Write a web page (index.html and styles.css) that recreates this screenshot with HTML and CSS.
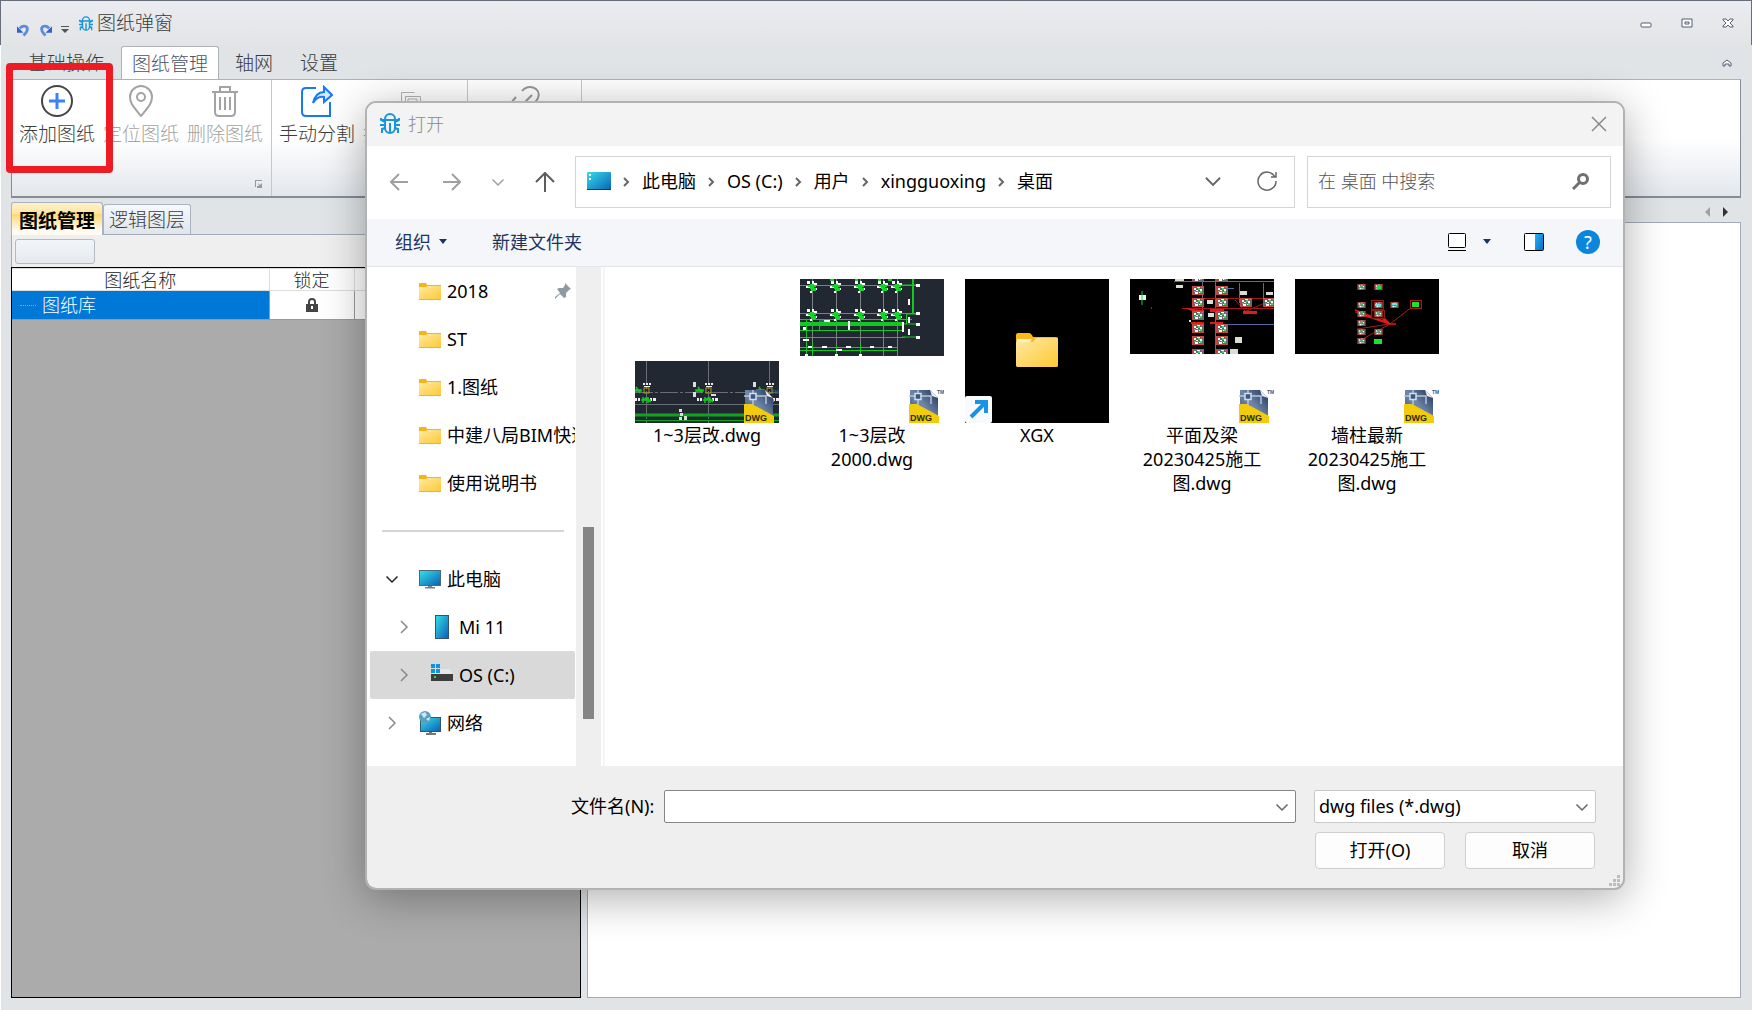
FILE: index.html
```html
<!DOCTYPE html>
<html lang="zh-CN">
<head>
<meta charset="utf-8">
<title>图纸弹窗</title>
<link rel="stylesheet" href="styles.css">
</head>
<body>
<svg class="defs" aria-hidden="true">
  <defs>
    <linearGradient id="gold" x1="0" y1="0" x2="1" y2="1"><stop offset="0" stop-color="#ffe9a6"/><stop offset="1" stop-color="#ffc933"/></linearGradient>
    <linearGradient id="sea" x1="0" y1="0" x2="1" y2="1"><stop offset="0" stop-color="#35dde6"/><stop offset="1" stop-color="#0a62b8"/></linearGradient>
    <linearGradient id="sky" x1="0" y1="0" x2="1" y2="1"><stop offset="0" stop-color="#29b2f0"/><stop offset="1" stop-color="#0070cf"/></linearGradient>
    <linearGradient id="navy" x1="0" y1="1" x2="1" y2="0"><stop offset="0" stop-color="#2f4a78"/><stop offset="0.5" stop-color="#6f87ab"/><stop offset="1" stop-color="#1d3156"/></linearGradient>
    <symbol id="bug" viewBox="0 0 20 21">
      <path d="M5 6a5 5 0 0 1 10 0M2 7h16M5 7v8a5 5 0 0 0 10 0V7M10 10v10M1 5v2l4 2M19 5v2l-4 2M0 12h5M20 12h-5M5 15l-3 1v4M15 15l3 1v4" fill="none" stroke="#1796db" stroke-width="2"/>
    </symbol>
    <symbol id="folder" viewBox="0 0 22 17">
      <path d="M0 0h7l1 2h14v15H0z" fill="#f5b31d"/>
      <path d="M0 4h7l2-1h13v13H0z" fill="url(#gold)"/>
    </symbol>
    <symbol id="monitor" viewBox="0 0 22 19">
      <rect x="0" y="0" width="22" height="16" fill="#4a6a78"/><rect x="1" y="1" width="20" height="14" fill="url(#sea)"/>
      <path d="M9 16h4v1h3v1.500H6V17h3z" fill="#777e84"/>
    </symbol>
    <symbol id="down" viewBox="0 0 14 14"><path d="M1.500 4.500L7 10l5.500-5.500" fill="none" stroke="currentColor" stroke-width="1.500"/></symbol>
    <symbol id="right" viewBox="0 0 14 14"><path d="M4 1l6 6-6 6" fill="none" stroke="currentColor" stroke-width="1.500"/></symbol>
    <symbol id="crumb" viewBox="0 0 8 10"><path d="M2 1l4 4-4 4" fill="none" stroke="#666" stroke-width="2"/></symbol>
    <symbol id="dwg" viewBox="0 0 35 33">
      <path d="M1 0h20l8 8v25H1z" fill="url(#navy)"/><path d="M21 0l8 8-6-2z" fill="#e8eef5"/>
      <path d="M0 6h6M12 6h10v8M9 0v3M9 10v5" stroke="#b9c6da" stroke-width="1.500" fill="none"/>
      <rect x="6" y="3.500" width="6" height="6" fill="#3a5784" stroke="#d5deea" stroke-width="1.500"/>
      <path d="M0 14h8l22 12v7H0z" fill="#f2cb0c"/>
      <text x="1" y="31" class="dwg-text">DWG</text><text x="28" y="4" class="tm-text">TM</text>
    </symbol>
    <symbol id="node" viewBox="0 0 12 14" overflow="visible">
      <path d="M1 1h3v3H1zM6 1h2v4H6zM0 6h4v2H0zM8 3h3v2H8zM7 8h4v2H7zM4 11h2v2H4z" fill="#fff"/>
      <path d="M2 5h8v2H2zM4 4h4v5H4zM5 8h5v3H5z" fill="#13d62a"/>
    </symbol>
    <symbol id="column" viewBox="0 0 24 22" overflow="visible">
      <path d="M9 0h2v2H9zM12 0h2v2h-2zM15 0h2v2h-2zM10 3h6v1h-6zM1 15h2v3H1zM4 15h2v3H4zM16 15h2v3h-2zM19 15h3v3h-3z" fill="#eee"/>
      <path d="M0 7h7v1H0zM2 4l4 6M8 18l4-3 5 4M9 14v6M14 14v6M7 17h10" fill="none" stroke="#12c91e" stroke-width="1.500"/>
      <rect x="10" y="5" width="5" height="5" fill="none" stroke="#a39a24"/>
    </symbol>
    <symbol id="sheet" viewBox="0 0 12 9">
      <rect x="0.500" y="0.500" width="11" height="8" fill="#5d6b62" stroke="#c44" />
      <path d="M2 2h2v2H2zM5 1h3v1H5zM8 3h2v2H8zM3 6h3v2H3zM7 6h2v1H7zM4 4h2v1H4z" fill="#fff"/><path d="M6 2h2v2H6zM2 5h2v1H2zM8 5h2v2H8z" fill="#2fe05a"/><path d="M5 5h2v1H5zM9 1h2v1H9z" fill="#d44fc4"/>
    </symbol>
  </defs>
</svg>

<div class="app">
  <header class="titlebar">
    <div class="quick">
      <button class="bare" aria-label="撤销"><svg width="13" height="14" viewBox="0 0 14 14"><path d="M3 5c4-4 9-2 8 2 0 2-2 4-4 6" fill="none" stroke="#5b8ad8" stroke-width="3"/><path d="M0 3v7h7z" fill="#3465c2"/></svg></button>
      <button class="bare" aria-label="重做"><svg width="13" height="14" viewBox="0 0 14 14"><path d="M11 5C7 1 2 3 3 7c0 2 2 4 4 6" fill="none" stroke="#5b8ad8" stroke-width="3"/><path d="M14 3v7H7z" fill="#3465c2"/></svg></button>
      <button class="bare" aria-label="自定义快速访问"><svg width="8" height="8" viewBox="0 0 8 8"><path d="M0 0h8v1H0zM0 3h8L4 7z" fill="#555"/></svg></button>
    </div>
    <h1 class="caption"><svg width="14" height="15"><use href="#bug"/></svg>图纸弹窗</h1>
    <div class="window-buttons">
      <button class="bare" aria-label="最小化"><svg width="12" height="12"><rect x="1" y="6" width="10" height="4" rx="1" fill="#fff" stroke="#555b75"/></svg></button>
      <button class="bare" aria-label="还原"><svg width="12" height="12"><path d="M1 2h10v8H1zM4 5h4v2H4z" fill="#fff" stroke="#555b75"/></svg></button>
      <button class="bare" aria-label="关闭"><svg width="12" height="12"><path d="M1 2h3l2 2 2-2h3v1L8 6l3 3v1H8L6 8l-2 2H1V9l3-3-3-3z" fill="#fff" stroke="#555b75"/></svg></button>
    </div>
  </header>

  <div class="frame">
    <nav class="tabs">
      <button class="tab tab-first">基础操作</button>
      <button class="tab tab-active">图纸管理</button>
      <button class="tab">轴网</button>
      <button class="tab tab-last">设置</button>
      <button class="bare collapse" aria-label="折叠功能区"><svg width="10" height="8"><path d="M1 4l4-3 4 3v3H7V5H3v2H1z" fill="#fff" stroke="#555b75"/></svg></button>
    </nav>

    <section class="ribbon">
      <div class="group">
        <button class="tool"><svg width="32" height="32"><circle cx="16" cy="16" r="15" fill="none" stroke="#454545" stroke-width="2"/><path d="M8 16h16M16 8v16" stroke="#3b82f6" stroke-width="3"/></svg>添加图纸</button>
        <button class="tool tool-off"><svg width="32" height="32" fill="none" stroke="#a3a3a3" stroke-width="2"><path d="M16 31C8 21 5 18 5 12a11 11 0 0 1 22 0c0 6-3 9-11 19z"/><circle cx="16" cy="12" r="4"/></svg>定位图纸</button>
        <button class="tool tool-off"><svg width="32" height="32" fill="none" stroke="#a3a3a3" stroke-width="2"><path d="M3 7h26M11 6V2h10v4M6 8v19q0 4 4 4h12q4 0 4-4V8M11 12v13M16 12v13M21 12v13"/></svg>删除图纸</button>
        <svg class="launcher" width="8" height="8"><path d="M0 7V0h7" fill="none" stroke="#999" stroke-width="2"/><path d="M3 3l2 2 2-2v5H2V6h2z" fill="#999"/></svg>
      </div>
      <div class="group">
        <button class="tool"><svg width="32" height="32" fill="none" stroke="#1677ff" stroke-width="2"><path d="M15 3H5Q1 3 1 7v20q0 4 4 4h24V17"/><path d="M12 18C14 10 18 7 23 7V2l8 8-8 7v-5c-5-1-8 1-11 6z" fill="#d5e9fa"/></svg>手动分割</button>
        <button class="tool tool-off tool-wide"><svg width="32" height="32" fill="none" stroke="#b3b3b3" stroke-width="1"><path d="M6.500 26V7.500h13M10.500 11.500h15v17h-15zM13 14h9v8h-9z"/></svg><span>批</span></button>
      </div>
      <div class="group group-link">
        <button class="tool tool-off" aria-label="链接"><svg width="34" height="32" fill="none" stroke="#999" stroke-width="2"><path d="M15 6c6-8 20-3 16 7-1 3-4 5-6 7M9 12c-4 4-6 7-5 12M15 20l10-10"/></svg></button>
      </div>
    </section>

    <main class="workspace">
      <section class="left">
        <div class="panel-tabs">
          <button class="ptab ptab-active">图纸管理</button>
          <button class="ptab">逻辑图层</button>
        </div>
        <div class="panel-bar"><button class="blank" aria-label="筛选"></button></div>
        <div class="tree">
          <table>
            <thead><tr><th class="c-name">图纸名称</th><th class="c-lock">锁定</th><th></th></tr></thead>
            <tbody><tr><td class="chosen">图纸库</td><td class="c-lock"><svg width="12" height="14"><path d="M3 6V4a3 3 0 0 1 6 0v2" fill="none" stroke="#444" stroke-width="2"/><path d="M0 6h12v8H0z" fill="#444"/><path d="M5 8h2v3H5z" fill="#fff"/></svg></td><td></td></tr></tbody>
          </table>
        </div>
      </section>
      <section class="right">
        <div class="pager">
          <button class="bare" aria-label="上一页"><svg width="5" height="10"><path d="M5 0v10L0 5z" fill="#a0a0a0"/></svg></button>
          <button class="bare" aria-label="下一页"><svg width="5" height="10"><path d="M0 0v10l5-5z" fill="#333"/></svg></button>
        </div>
        <div class="canvas"></div>
      </section>
    </main>
  </div>
</div>

<div class="highlight"></div>

<div class="dialog" role="dialog" aria-labelledby="dialog-title">
  <header class="d-title">
    <svg width="20" height="21"><use href="#bug"/></svg>
    <h2 id="dialog-title">打开</h2>
    <button class="bare" aria-label="关闭"><svg width="16" height="16"><path d="M1 1l14 14M15 1L1 15" stroke="#8a8a8a" stroke-width="1.500"/></svg></button>
  </header>
  <div class="d-nav">
    <button class="bare" aria-label="后退"><svg width="18" height="18" fill="none" stroke="#a0a0a0" stroke-width="2"><path d="M18 9H1M9 1L1 9l8 8"/></svg></button>
    <button class="bare nav-fwd" aria-label="前进"><svg width="18" height="18" fill="none" stroke="#a0a0a0" stroke-width="2"><path d="M0 9h17M9 1l8 8-8 8"/></svg></button>
    <button class="bare nav-recent" aria-label="最近"><svg width="14" height="14"><use href="#down"/></svg></button>
    <button class="bare nav-up" aria-label="上移"><svg width="20" height="20" fill="none" stroke="#5c5c5c" stroke-width="2"><path d="M10 20V1M1 10l9-9 9 9"/></svg></button>
    <div class="address">
      <svg width="24" height="18"><rect width="24" height="18" rx="1" fill="url(#sea)"/><path d="M0 17h24v1H0z" fill="#07406f"/><path d="M2 2h2v2H2zM2 6h2v2H2z" fill="#fff"/></svg>
      <svg class="sep" width="8" height="10"><use href="#crumb"/></svg><a href="#">此电脑</a>
      <svg class="sep" width="8" height="10"><use href="#crumb"/></svg><a href="#">OS (C:)</a>
      <svg class="sep" width="8" height="10"><use href="#crumb"/></svg><a href="#">用户</a>
      <svg class="sep" width="8" height="10"><use href="#crumb"/></svg><a href="#">xingguoxing</a>
      <svg class="sep" width="8" height="10"><use href="#crumb"/></svg><a href="#">桌面</a>
      <button class="bare history" aria-label="历史"><svg width="18" height="18"><use href="#down"/></svg></button>
      <button class="bare" aria-label="刷新"><svg width="20" height="20" fill="none" stroke="#666" stroke-width="1.500"><path d="M18 6a9 9 0 1 0 1 4M19 1v5h-5"/></svg></button>
    </div>
    <label class="search"><input type="text" placeholder="在 桌面 中搜索" aria-label="搜索"><svg width="17" height="17" fill="none" stroke="#707070"><circle cx="11" cy="6" r="4.500" stroke-width="3"/><path d="M8 9l-7 7" stroke-width="3"/></svg></label>
  </div>
  <div class="d-tools">
    <button class="bare">组织<svg class="caret" width="8" height="5"><path d="M0 0h8L4 5z" fill="#1c3560"/></svg></button>
    <button class="bare new-folder">新建文件夹</button>
    <button class="bare view" aria-label="视图"><svg width="18" height="18" fill="#fff" stroke="#000"><rect x="0.500" y="0.500" width="17" height="14" rx="1"/><path d="M0 17.500h18"/></svg></button>
    <button class="bare view-more" aria-label="更多视图"><svg width="8" height="5"><path d="M0 0h8L4 5z" fill="#1c3560"/></svg></button>
    <button class="bare preview" aria-label="预览窗格"><svg width="20" height="18"><rect x="0.500" y="0.500" width="19" height="17" rx="1" fill="#fff" stroke="#000"/><path d="M11 1h8v16h-8z" fill="url(#sky)"/></svg></button>
    <button class="help" aria-label="帮助">?</button>
  </div>
  <div class="d-body">
    <nav class="side">
      <a class="item" href="#"><i class="chev"></i><svg width="22" height="17"><use href="#folder"/></svg><span>2018</span><svg class="pin" width="16" height="16"><path d="M10 0l6 6-2 1-3 3v4l-2 1-4-4-4 4-1 1v-2l5-4-3-4 2-1h4l2-3z" fill="#8d9aa3"/></svg></a>
      <a class="item" href="#"><i class="chev"></i><svg width="22" height="17"><use href="#folder"/></svg><span>ST</span></a>
      <a class="item" href="#"><i class="chev"></i><svg width="22" height="17"><use href="#folder"/></svg><span>1.图纸</span></a>
      <a class="item" href="#"><i class="chev"></i><svg width="22" height="17"><use href="#folder"/></svg><span>中建八局BIM快速</span></a>
      <a class="item" href="#"><i class="chev"></i><svg width="22" height="17"><use href="#folder"/></svg><span>使用说明书</span></a>
      <hr>
      <a class="item" href="#"><svg class="chev chev-open" width="14" height="14"><use href="#down"/></svg><svg width="22" height="19"><use href="#monitor"/></svg><span>此电脑</span></a>
      <a class="item item-sub" href="#"><svg class="chev" width="14" height="14"><use href="#right"/></svg><svg width="22" height="24"><path d="M4 0h14v24H4z" fill="#33566b"/><path d="M5 1h12v22H5z" fill="url(#sea)"/></svg><span>Mi 11</span></a>
      <a class="item item-sub item-on" href="#"><svg class="chev" width="14" height="14"><use href="#right"/></svg><svg width="22" height="22"><path d="M2 5h17l3 6H0z" fill="#e4e7ea"/><path d="M0 0h4v4H0zM5 0h4v4H5zM0 5h4v4H0zM5 5h4v4H5z" fill="#0f94e4"/><path d="M0 10h22v7H0z" fill="#3d3d3d"/><path d="M3 12h2v2H3z" fill="#2be02b"/></svg><span>OS (C:)</span></a>
      <a class="item" href="#"><svg class="chev" width="14" height="14"><use href="#right"/></svg><svg width="22" height="24"><rect x="1" y="6" width="21" height="15" fill="#33566b"/><rect x="2" y="7" width="19" height="13" fill="url(#sea)"/><path d="M10 21h3v1h4v2H7v-2h3z" fill="#777"/><circle cx="6" cy="6" r="6" fill="#5b9fc4"/><path d="M2 3l4-2 2 3-3 3zM7 8l4-2-1 4z" fill="#d0e8f4"/></svg><span>网络</span></a>
    </nav>
    <div class="scroll"><div class="thumb"></div></div>
    <ul class="files">
      <li>
        <div class="pic"><svg width="144" height="62"><rect width="144" height="62" fill="#222831"/><path d="M11.500 0v62M73.500 0v62M134.500 0v62" stroke="#686d73" stroke-dasharray="24 2 2 2"/><path d="M0 31.500h144" stroke="#686d73" stroke-dasharray="18 2 3 2"/><path d="M0 43.500h144" stroke="#686d73"/><path d="M0 54h144" stroke="#12a31e" stroke-width="3"/><path d="M0 59.500h144" stroke="#12a31e"/><use href="#column" x="-1" y="22" width="24" height="22"/><use href="#column" x="61" y="22" width="24" height="22"/><use href="#column" x="122" y="22" width="24" height="22"/><path d="M58 21h3v5h-3zM58 31h3v5h-3zM118 21h3v5h-3zM76 33h5v2h-5zM44 48h3v3h-3zM45 52h3v3h-3zM44 56h3v3h-3zM49 55h3v4h-3z" fill="#ddd"/></svg><svg class="badge" width="35" height="33"><use href="#dwg"/></svg></div>
        <span>1~3层改.dwg</span>
      </li>
      <li>
        <div class="pic pic-top"><svg width="144" height="77"><rect width="144" height="77" fill="#222831"/><path d="M12.500 0v77M36.500 0v77M60.500 0v77M83.500 0v77M97.500 0v77M0 6.500h118M0 34.500h118M0 40.500h112M0 58.500h105" stroke="#7b8085"/><path d="M0 45h102" stroke="#12c91e" stroke-width="4"/><path d="M0 51.500h103M0 68.500h98M0 71.500h98M12.500 62v15M36.500 66v11M60.500 64v13M83.500 64v13M97.500 60v17M6.500 40v37M106.500 34v11M100 45h18M102 58h16M112.500 0v35M106 35h12M98 6h20" stroke="#12c91e"/><path d="M113 0v35" stroke="#12c91e" stroke-width="2"/><path d="M109 20v6M109 38v6M109 50v6M103 43v10M49 42v9" stroke="#fff" stroke-width="2"/><path d="M116 5h4v3h-4zM116 33h4v3h-4zM116 44h4v3h-4zM116 57h4v3h-4zM8 67h4v2H8zM22 67h5v2h-5zM46 67h5v2h-5zM70 67h4v2h-4zM88 67h4v2h-4zM36 70h6v2h-6zM24 41h6v2h-6zM3 48h3v3H3zM3 60h6v2H3zM5 75h3v2H5zM35 75h3v2h-3zM59 75h3v2h-3z" fill="#fff"/><path d="M19.500 51v-9h5" fill="none" stroke="#1ea5bd"/><path d="M30 0h4v2h-4zM55 0h3v3h-3zM78 0h3v2h-3zM88 0h4v2h-4z" fill="#13d62a"/><use href="#node" x="6" y="1" width="12" height="14"/><use href="#node" x="30" y="1" width="12" height="14"/><use href="#node" x="54" y="1" width="12" height="14"/><use href="#node" x="77" y="1" width="12" height="14"/><use href="#node" x="91" y="1" width="12" height="14"/><use href="#node" x="6" y="29" width="12" height="14"/><use href="#node" x="30" y="29" width="12" height="14"/><use href="#node" x="54" y="29" width="12" height="14"/><use href="#node" x="77" y="29" width="12" height="14"/><use href="#node" x="91" y="29" width="12" height="14"/></svg><svg class="badge" width="35" height="33"><use href="#dwg"/></svg></div>
        <span>1~3层改<br>2000.dwg</span>
      </li>
      <li>
        <div class="pic"><svg width="144" height="144"><rect width="144" height="144"/><path d="M51 56q0-2 2-2h11q2 0 4 4h23q2 0 2 2v26q0 2-2 2H53q-2 0-2-2z" fill="#ffb81a"/><path d="M51 63h17l3-4h22v27q0 2-2 2H53q-2 0-2-2z" fill="url(#gold)"/><path d="M52 60h15l-2 3H52z" fill="#fff3d2"/><rect x="0" y="117" width="27" height="27" rx="2" fill="#f8fafd"/><path d="M6 138l14-14M10 123h11v11" fill="none" stroke="#1a93e4" stroke-width="4"/></svg></div>
        <span>XGX</span>
      </li>
      <li>
        <div class="pic pic-top"><svg width="144" height="75"><rect width="144" height="75"/><path d="M72.500 0v34M85.500 0v75M109.500 4v20M133.500 4v20M44 2.500h100M85 45.500h59M98 9.500h6" stroke="#5a6aa5"/><path d="M73 19.500h71M52 29.500h92M105 21l10 11M144 20l-30 13M122 29l-8 5" stroke="#a31818" fill="none"/><path d="M80 30h14v3H80zM61 43h13v2H61zM80 43h13v2H80zM113 32h14v3h-14zM54 29l8 3 12 1v-2z" fill="#e11b1b"/><path d="M9 16h7v5H9z" fill="#dfe"/><path d="M12 12v14M21 29h1" stroke="#25c957"/><use href="#sheet" x="62" y="-6" width="12" height="9"/><use href="#sheet" x="86" y="-6" width="12" height="9"/><use href="#sheet" x="62" y="7" width="12" height="9"/><use href="#sheet" x="86" y="7" width="12" height="9"/><use href="#sheet" x="62" y="19" width="12" height="9"/><use href="#sheet" x="86" y="19" width="12" height="9"/><use href="#sheet" x="110" y="19" width="12" height="9"/><use href="#sheet" x="133" y="19" width="12" height="9"/><use href="#sheet" x="62" y="32" width="12" height="9"/><use href="#sheet" x="86" y="32" width="12" height="9"/><use href="#sheet" x="62" y="45" width="12" height="9"/><use href="#sheet" x="86" y="45" width="12" height="9"/><use href="#sheet" x="62" y="57" width="12" height="9"/><use href="#sheet" x="86" y="57" width="12" height="9"/><use href="#sheet" x="62" y="70" width="12" height="9"/><use href="#sheet" x="86" y="70" width="12" height="9"/><path d="M45 0h9v2h-9zM46 6h7v3h-7zM110 12h7v4h-7zM136 13h7v3h-7zM77 21h6v4h-6zM78 34h6v4h-6zM105 58h7v6h-7zM100 70h8v5h-8zM59 41h2v2h-2z" fill="#dcdcd2"/></svg><svg class="badge" width="35" height="33"><use href="#dwg"/></svg></div>
        <span>平面及梁<br>20230425施工<br>图.dwg</span>
      </li>
      <li>
        <div class="pic pic-top"><svg width="144" height="75"><rect width="144" height="75"/><path d="M62 50l33-5 22-17M64 62l31-17M60 33l35 12" stroke="#a81c1c" fill="none"/><path d="M60 31l18 7 17 7h6M68 36l27 9M82 36l13 9M88 38l7 7" fill="none" stroke="#e11b1b" stroke-width="1.500"/><rect x="76.500" y="21.500" width="12" height="9" fill="#300" stroke="#8c1c1c"/><rect x="115.500" y="21.500" width="11" height="8" fill="#300" stroke="#a81c1c"/><rect x="76.500" y="31.500" width="13" height="8" fill="#300" stroke="#8c1c1c"/><use href="#sheet" x="62" y="5" width="9" height="6"/><use href="#sheet" x="79" y="5" width="9" height="6"/><use href="#sheet" x="62" y="23" width="9" height="6"/><use href="#sheet" x="79" y="23" width="9" height="6"/><use href="#sheet" x="95" y="23" width="9" height="6"/><use href="#sheet" x="62" y="32" width="9" height="6"/><use href="#sheet" x="79" y="32" width="9" height="6"/><use href="#sheet" x="62" y="41" width="9" height="6"/><use href="#sheet" x="62" y="50" width="9" height="6"/><use href="#sheet" x="79" y="50" width="9" height="6"/><use href="#sheet" x="62" y="59" width="9" height="6"/><path d="M79 60h8v5h-8zM117 23h7v5h-7zM82 7h4v3h-4z" fill="#1ce32a"/><path d="M80 25h6v2h-6zM97 24h5v2h-5z" fill="#5fe6ea"/></svg><svg class="badge" width="35" height="33"><use href="#dwg"/></svg></div>
        <span>墙柱最新<br>20230425施工<br>图.dwg</span>
      </li>
    </ul>
  </div>
  <footer class="d-foot">
    <label for="fname">文件名(N):</label>
    <div class="combo combo-name"><input id="fname" type="text"><svg width="14" height="14"><use href="#down"/></svg></div>
    <div class="foot-right">
      <div class="combo combo-type"><select aria-label="文件类型"><option>dwg files (*.dwg)</option></select><svg width="14" height="14"><use href="#down"/></svg></div>
      <div class="actions"><button class="push">打开(O)</button><button class="push">取消</button></div>
    </div>
  </footer>
  <svg class="grip" width="12" height="12"><path d="M8 0h3v3H8zM4 4h3v3H4zM8 4h3v3H8zM0 8h3v3H0zM4 8h3v3H4zM8 8h3v3H8z" fill="#bdbdbd"/></svg>
</div>
</body>
</html>
```
FILE: styles.css
```css
* { box-sizing: border-box; }
body {
  margin: 0;
  font-family: "Noto Sans", "Noto Sans CJK SC", sans-serif;
  font-size: 18px;
  line-height: 24px;
  color: #000;
}
button, input, select { font: inherit; color: inherit; }
button { padding: 0; border: 0; background: none; }
a { color: inherit; text-decoration: none; }
svg { display: block; flex: none; }
h1, h2 { margin: 0; font-size: inherit; font-weight: 300; }
.defs { position: absolute; width: 0; height: 0; }
.bare { display: flex; align-items: center; }
.dwg-text { font: bold 9px "Liberation Sans", sans-serif; fill: #2a2a10; }
.tm-text { font: bold 5px "Liberation Sans", sans-serif; fill: #2e5c8a; }

/* main window */
.app {
  display: flex;
  flex-direction: column;
  min-height: 100vh;
  background: #e4e5e7;
  color: #3b3b3b;
  font-size: 19px;
  font-weight: 300;
}
.titlebar {
  display: flex;
  height: 45px;
  padding: 0 17px 0 16px;
  border: solid #676d79;
  border-width: 1px 1px 0;
  background: linear-gradient(#ebecf1, #e3e4e6);
}
.quick { display: flex; gap: 9px; align-items: center; padding-top: 14px; }
.caption { display: flex; flex: 1; align-items: center; gap: 4px; margin-left: 10px; }
.window-buttons { display: flex; gap: 29px; }
.frame {
  display: flex;
  flex: 1;
  flex-direction: column;
  padding: 0 11px 12px 10px;
  border-left: 1px solid #fff;
  background: #e0e4e7;
}
.tabs { display: flex; height: 34px; padding: 1px 9px 0 8px; }
.tab { padding: 0 8px; border: 1px solid transparent; border-bottom: 0; }
.tab-first { margin-right: 8px; }
.tab-active {
  padding: 0 10px;
  margin-right: 7px;
  border-color: #aeb3ba;
  border-radius: 3px 3px 0 0;
  background: #fff;
  color: #4a5566;
  margin-bottom: -1px;
}
.tab-last { margin-left: 9px; }
.collapse { margin-left: auto; }
.ribbon {
  display: flex;
  height: 119px;
  border: 1px solid #868c95;
  border-top-color: #adb3b9;
  border-bottom-width: 2px;
  background: linear-gradient(#fff 50%, #e3e7ec);
}
.group {
  position: relative;
  display: flex;
  gap: 8px;
  padding: 5px 8px 0 7px;
  border-right: 1px solid #c4c8cc;
}
.group-link { width: 114px; justify-content: center; }
.tool {
  display: flex;
  flex-direction: column;
  align-items: center;
  gap: 5px;
}
.tool-off { color: #a3a3a3; }
.tool-wide { width: 96px; }
.tool-wide span { align-self: flex-start; }
.launcher { position: absolute; right: 8px; bottom: 8px; }

.workspace { display: flex; flex: 1; gap: 6px; }
.left { display: flex; flex-direction: column; width: 570px; padding-top: 4px; }
.panel-tabs { display: flex; height: 33px; border-bottom: 1px solid #a3abb8; }
.ptab {
  padding: 0 5px;
  margin-top: 2px;
  border: 1px solid #a9b3c2;
  border-bottom: 0;
  border-radius: 3px 3px 0 0;
  background: linear-gradient(#f6f8fa, #e0e5ec);
}
.ptab-active {
  margin: 0 0 -1px;
  padding: 3px 7px 0;
  background: linear-gradient(#fff1cc, #ffe5a0 35%, #ffd873 36%, #fffbf0 85%);
  font-weight: 700;
  color: #000;
}
.panel-bar { height: 32px; padding: 4px 3px; border-left: 1px solid #a3abb8; background: #efefef; }
.blank {
  display: block;
  width: 80px;
  height: 25px;
  border: 1px solid #b4bac2;
  border-radius: 3px;
  background: linear-gradient(#f3f6f9, #e5e9ed);
}
.tree { flex: 1; border: 1px solid #000; background: #ababab; }
table { width: 100%; border-collapse: collapse; table-layout: fixed; font-size: 18px; line-height: 20px; }
th, td { padding: 0; border: 1px solid #999; background: #fff; }
th { height: 22px; font-weight: 300; color: #222; border-color: #ddd; }
tr > :first-child { border-left: 0; }
td { height: 29px; }
.c-name { width: 257px; }
.c-lock { width: 85px; }
td svg { margin: 0 auto; }
.chosen { padding-left: 30px; background: #0078d7; color: #fff; }
.chosen::before {
  content: "";
  float: left;
  width: 16px;
  margin: 10px 0 0 -22px;
  border-top: 1px dotted #b0a090;
}
.right { display: flex; flex: 1; flex-direction: column; }
.pager { display: flex; gap: 13px; justify-content: flex-end; height: 24px; padding: 3px 13px 0 0; }
.canvas { flex: 1; border: 1px solid #a3abb8; background: #fff; }

.highlight {
  position: absolute;
  left: 6px;
  top: 63px;
  width: 107px;
  height: 110px;
  border: 7px solid #ed1c24;
  border-radius: 4px;
}

/* file dialog */
.dialog {
  position: absolute;
  left: 365px;
  right: 127px;
  top: 101px;
  display: flex;
  flex-direction: column;
  border: 2px solid #b2b2b2;
  border-radius: 11px;
  background: #efefef;
  background-clip: padding-box;
  box-shadow: 0 8px 44px rgba(0, 0, 0, 0.32);
  overflow: hidden;
}
.d-title { display: flex; align-items: center; gap: 8px; height: 43px; padding: 0 16px 2px 13px; background: #f3f3f3; color: #8a8a8a; }
.d-title h2 { flex: 1; }
.d-nav { display: flex; align-items: center; height: 73px; padding: 0 12px 1px 23px; background: #fff; color: #a0a0a0; }
.nav-fwd { margin-left: 35px; }
.nav-recent { margin-left: 30px; }
.nav-up { margin: 0 20px 0 30px; }
.address {
  display: flex;
  flex: 1;
  align-items: center;
  height: 52px;
  padding: 0 17px 2px 11px;
  border: 1px solid #d5d5d5;
  color: #000;
}
.sep { margin: 2px 12px 0 11px; }
.history { margin: 0 35px 0 auto; color: #666; }
.search {
  display: flex;
  align-items: center;
  width: 304px;
  height: 52px;
  margin-left: 12px;
  padding: 0 21px 2px 10px;
  border: 1px solid #d5d5d5;
}
.search input { flex: 1; min-width: 0; padding: 0; border: 0; outline: 0; background: none; font-weight: 300; }
.search input::placeholder { color: #555; opacity: 1; }
.d-tools {
  display: flex;
  align-items: center;
  height: 48px;
  padding: 0 23px 2px 28px;
  border-bottom: 1px solid #e3e5e8;
  background: #f4f6f9;
  color: #1c3560;
}
.caret { margin-left: 8px; }
.new-folder { margin-left: 45px; }
.view { margin-left: auto; }
.view-more { margin-left: 17px; }
.preview { margin: 0 32px 0 33px; }
.help { width: 24px; height: 24px; border-radius: 50%; background: #0c86dd; color: #fff; }

.d-body { display: flex; background: #fff; }
.side { width: 209px; padding: 0 1px 19px 3px; overflow: hidden; }
.item { display: flex; align-items: center; height: 48px; padding-left: 15px; border-radius: 2px; white-space: nowrap; }
.item span { flex: 1; min-width: 0; overflow: hidden; margin-left: 6px; }
.chev { flex: none; width: 14px; margin-right: 20px; color: #8a8a8a; }
.chev-open { color: #222; }
.item-sub { padding-left: 27px; }
.item-on { background: #d9d9d9; }
.pin { margin-right: 4px; }
.side hr { height: 2px; margin: 23px 11px 23px 12px; border: 0; background: #d5d5d5; }
.scroll { width: 25px; padding: 260px 7px 0; background: #efefef; }
.thumb { height: 192px; background: #858585; }
.files {
  display: flex;
  flex: 1;
  flex-wrap: wrap;
  align-content: flex-start;
  gap: 21px;
  margin: 0 0 0 2px;
  padding: 12px 0 0 30px;
  border-left: 2px solid #f5f5f5;
  list-style: none;
  text-align: center;
}
.files li { width: 144px; }
.pic { position: relative; display: flex; align-items: flex-end; height: 144px; }
.pic-top { align-items: flex-start; }
.badge { position: absolute; right: 0; bottom: 0; }

.d-foot { display: flex; align-items: flex-start; height: 122px; padding: 24px 27px 0 204px; }
.d-foot label { line-height: 32px; }
.combo {
  display: flex;
  align-items: center;
  height: 33px;
  border: 1px solid #868686;
  border-radius: 2px;
  background: #fff;
  color: #666;
}
.combo input { flex: 1; min-width: 0; height: 100%; border: 0; outline: 0; background: none; }
.combo-name { flex: 1; margin: 0 18px 0 10px; padding-right: 6px; }
.combo-type { display: grid; border-color: #c9c9c9; }
.combo-type > * { grid-area: 1 / 1; }
.combo-type svg { justify-self: end; margin-right: 6px; pointer-events: none; }
.combo-type select { width: 100%; height: 100%; padding: 0 4px 2px; border: 0; appearance: none; background: none; color: #000; }
.foot-right { width: 282px; }
.actions { display: flex; gap: 20px; padding: 9px 1px 0; }
.push { flex: 1; height: 37px; padding-bottom: 2px; border: 1px solid #cfcfcf; border-radius: 4px; background: #fdfdfd; }
.grip { position: absolute; right: 2px; bottom: 1px; }
```
